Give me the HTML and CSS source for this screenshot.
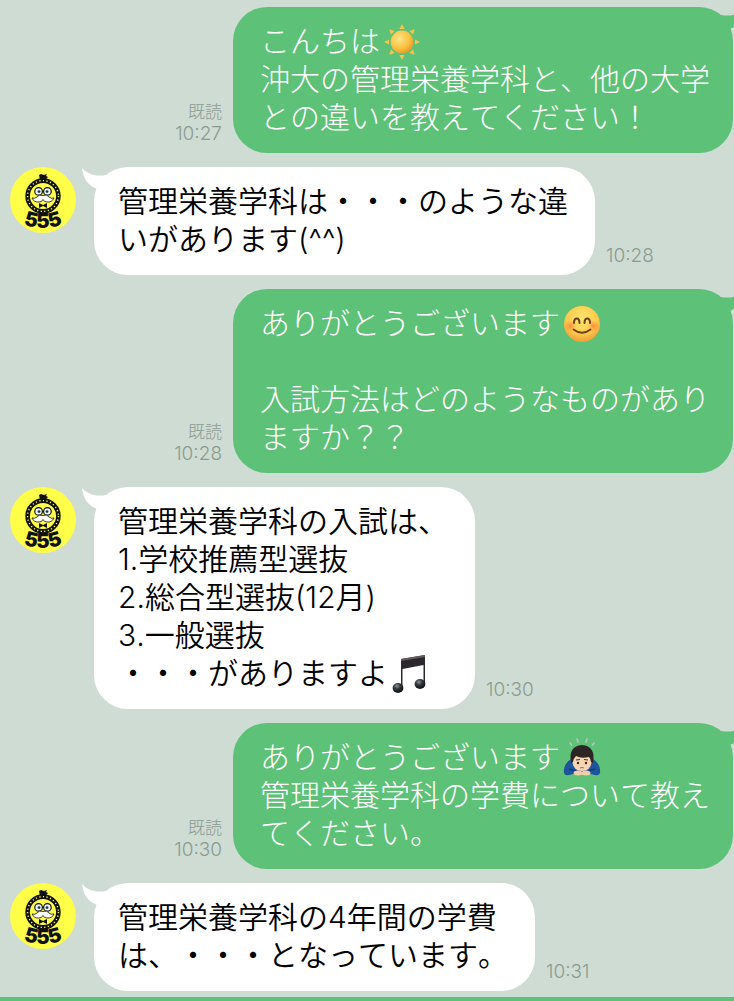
FILE: index.html
```
<!DOCTYPE html>
<html lang="ja">
    <head>
        <title>トーク</title>
        <meta charset="UTF-8">
        <meta name="viewport" content="width=device-width">
        <link rel="stylesheet" href="styles.css">
    </head>
    <body>
        <!-- shared drawings -->
        <svg class="defs" aria-hidden="true">
            <symbol id="tail" viewBox="0 0 30 26">
                <path d="M0 1 C6 7 13 10 24 8 L26 26 L13 21 C6 18 1 11 0 1Z"/>
            </symbol>
            <radialGradient id="sunFill" cx=".38" cy=".35" r=".7">
                <stop offset="0" stop-color="#ffe38a"/>
                <stop offset=".6" stop-color="#fbc443"/>
                <stop offset="1" stop-color="#e79a25"/>
            </radialGradient>
            <radialGradient id="faceFill" cx=".5" cy=".35" r=".65">
                <stop offset="0" stop-color="#ffe672"/>
                <stop offset=".65" stop-color="#fccb4c"/>
                <stop offset="1" stop-color="#ee9e35"/>
            </radialGradient>
            <radialGradient id="cheek">
                <stop offset="0" stop-color="#f8703a" stop-opacity=".7"/>
                <stop offset="1" stop-color="#f8803a" stop-opacity="0"/>
            </radialGradient>
            <radialGradient id="noteFill" cx=".4" cy=".3" r=".6">
                <stop offset="0" stop-color="#8a929a"/>
                <stop offset=".5" stop-color="#33383e"/>
                <stop offset="1" stop-color="#15171b"/>
            </radialGradient>
        </svg>

        <main class="talk">
            <div class="row me">
                <div class="info"><span>既読</span><time>10:27</time></div>
                <div class="bubble">
                    <svg class="tail" aria-hidden="true"><use href="#tail"/></svg>
                    こんちは<svg class="emoji" viewBox="0 0 36 36" role="img" aria-label="太陽">
                        <g fill="#f6c44b">
                            <path id="ray" d="M18 0 L20.600 5 L15.400 5Z"/>
                            <use href="#ray" transform="rotate(45 18 18)"/>
                            <use href="#ray" transform="rotate(90 18 18)"/>
                            <use href="#ray" transform="rotate(135 18 18)"/>
                            <use href="#ray" transform="rotate(180 18 18)"/>
                            <use href="#ray" transform="rotate(225 18 18)"/>
                            <use href="#ray" transform="rotate(270 18 18)"/>
                            <use href="#ray" transform="rotate(315 18 18)"/>
                        </g>
                        <circle cx="18" cy="18" r="11.400" fill="url(#sunFill)"/>
                    </svg><br>沖大の管理栄養学科と、他の大学との違いを教えてください！
                </div>
            </div>

            <div class="row bot">
                <svg class="avatar" viewBox="0 0 66 66" role="img" aria-label="555">
                    <g id="mascot">
                        <circle cx="33" cy="33" r="33" fill="#ffff4a"/>
                        <path d="M29 8 L31 7 L34 8 L37 7 L36 9 L38 10 L35 13 L30 13Z" fill="#111"/>
                        <circle cx="33" cy="29" r="15.400" fill="none" stroke="#111" stroke-width="4.600"/>
                        <circle cx="33" cy="29" r="15.400" fill="none" stroke="#ffff4a" stroke-width="1.400" stroke-dasharray="1.200 2.400"/>
                        <circle cx="28.600" cy="24.400" r="3.800" fill="#e9f6ff" stroke="#111" stroke-width="1.200"/>
                        <circle cx="37.400" cy="24.400" r="3.800" fill="#e9f6ff" stroke="#111" stroke-width="1.200"/>
                        <circle cx="29" cy="24.600" r="1.400" fill="#234"/>
                        <circle cx="37" cy="24.600" r="1.400" fill="#234"/>
                        <path d="M33 28.500 Q37 27 39 30 Q41 32 44 31 Q42 35.500 37 35 Q34 35 33 32.500 Q32 35 29 35 Q24 35.500 22 31 Q25 32 27 30 Q29 27 33 28.500Z" fill="#fff" stroke="#111" stroke-width=".8"/>
                        <path d="M29 36 L33 38 L37 36 L37 41 L33 39 L29 41Z" fill="#111"/>
                        <path id="arc" d="M10 56 Q33 66 56 56" fill="none"/>
                        <text class="mascot-no"><textPath href="#arc" startOffset="50%" text-anchor="middle">555</textPath></text>
                    </g>
                </svg>
                <div class="bubble">
                    <svg class="tail" aria-hidden="true"><use href="#tail"/></svg>
                    管理栄養学科は・・・のような違いがあります(^^)
                </div>
                <div class="info"><time>10:28</time></div>
            </div>

            <div class="row me">
                <div class="info"><span>既読</span><time>10:28</time></div>
                <div class="bubble">
                    <svg class="tail" aria-hidden="true"><use href="#tail"/></svg>
                    ありがとうございます<svg class="emoji" viewBox="0 0 36 36" role="img" aria-label="笑顔">
                        <circle cx="18" cy="18" r="18" fill="url(#faceFill)"/>
                        <circle cx="6.500" cy="20" r="6" fill="url(#cheek)"/>
                        <circle cx="29.500" cy="20" r="6" fill="url(#cheek)"/>
                        <path d="M10 17 C10 11 15.500 11 15.500 17 M20.500 17 C20.500 11 26 11 26 17" fill="none" stroke="#69401a" stroke-width="2" stroke-linecap="round"/>
                        <path d="M9.500 23.500 Q18 30 26.500 23.500" fill="none" stroke="#69401a" stroke-width="1.800" stroke-linecap="round"/>
                    </svg><br><br>入試方法はどのようなものがありますか？？
                </div>
            </div>

            <div class="row bot">
                <svg class="avatar" viewBox="0 0 66 66" role="img" aria-label="555"><use href="#mascot"/></svg>
                <div class="bubble">
                    <svg class="tail" aria-hidden="true"><use href="#tail"/></svg>
                    管理栄養学科の入試は、<br>1.学校推薦型選抜<br>2.総合型選抜(12月)<br>3.一般選抜<br>・・・がありますよ<svg class="emoji" viewBox="0 0 36 36" role="img" aria-label="音符">
                        <path d="M9 3 L33 -1 L33 27 L31.500 27 L31.500 9 L10.500 13 L10.500 31 L9 31Z" fill="#2a282c"/>
                        <path d="M9 3 L33 -1 L33 1 L9 5Z" fill="#66595c"/>
                        <ellipse cx="6" cy="32" rx="5.400" ry="5" fill="url(#noteFill)"/>
                        <ellipse cx="28" cy="28" rx="5.400" ry="5" fill="url(#noteFill)"/>
                    </svg>
                </div>
                <div class="info"><time>10:30</time></div>
            </div>

            <div class="row me">
                <div class="info"><span>既読</span><time>10:30</time></div>
                <div class="bubble">
                    <svg class="tail" aria-hidden="true"><use href="#tail"/></svg>
                    ありがとうございます<svg class="emoji" viewBox="0 0 36 36" role="img" aria-label="お辞儀">
                        <path d="M6 3 L7.500 5 M13 -1 L14 2 M23 -1 L22 2 M30 3 L28.500 5" stroke="#b3c2b8" stroke-width="1.800" stroke-linecap="round"/>
                        <path d="M0 33 Q-1 23 9 18 L27 18 Q37 23 36 33 Q35 36 31 35 L22 33 L14 33 L5 35 Q1 36 0 33Z" fill="#1d549c"/>
                        <path d="M5 29 L12 31 M31 29 L24 31" stroke="#123d7a" stroke-width="1.500"/>
                        <path d="M8 18 Q8 31 18 31 Q28 31 28 18 L26 12 L10 12Z" fill="#f6d5b5"/>
                        <path d="M7 23 Q4 6 18 5 Q32 6 29 23 L27 22 Q27 19 25 17 Q17 19 12 16 Q9 19 9 22Z" fill="#2d2624"/>
                        <path d="M12 20 L16 19.500 M20 19.500 L24 20" stroke="#4a3328" stroke-width="1"/>
                        <circle cx="14" cy="23" r="1.200" fill="#3d261c"/>
                        <circle cx="22" cy="23" r="1.200" fill="#3d261c"/>
                        <path d="M16 28 Q18 27 20 28" fill="none" stroke="#b56448" stroke-width="1"/>
                        <ellipse cx="14" cy="33" rx="4.500" ry="2.500" fill="#f3cca8"/>
                        <ellipse cx="22" cy="33" rx="4.500" ry="2.500" fill="#f3cca8"/>
                    </svg><br>管理栄養学科の学費について教えてください。
                </div>
            </div>

            <div class="row bot">
                <svg class="avatar" viewBox="0 0 66 66" role="img" aria-label="555"><use href="#mascot"/></svg>
                <div class="bubble">
                    <svg class="tail" aria-hidden="true"><use href="#tail"/></svg>
                    管理栄養学科の4年間の学費<br>は、・・・となっています。
                </div>
                <div class="info"><time>10:31</time></div>
            </div>
        </main>
        <div class="bottom-line"></div>
    </body>
</html>
```

FILE: styles.css
```
body{
    margin: 0;
    background-color: #cedcd3;
    font-family: Inter, "Noto Sans CJK JP", sans-serif;
    font-weight: 300;
    font-kerning: none;
    text-spacing-trim: space-all;
    overflow-x: hidden;
}
.defs{
    position: absolute;
    width: 0;
    height: 0;
}
.talk{
    display: flex;
    flex-direction: column;
    gap: 14px;
    padding: 7px 0 6px 10px;
    overflow: hidden;
}
.row{
    display: flex;
    align-items: flex-end;
}
.me{
    justify-content: flex-end;
    padding-right: 1px;
}
.bubble{
    position: relative;
    box-sizing: border-box;
    max-width: 501px;
    border-radius: 34px;
    font-size: 30px;
    line-height: 38px;
}
.me .bubble{
    max-width: 500px;
    padding: 15px 23px 17px 27px;
    background-color: #5dc178;
    color: white;
}
.bot .bubble{
    padding: 15px 27px 17px 24px;
    background-color: white;
    color: black;
    font-weight: 350;
}
/* the small horn at the top corner of a bubble */
.tail{
    position: absolute;
    top: 0;
    left: -12px;
    width: 30px;
    height: 26px;
    fill: white;
}
.me .tail{
    left: auto;
    right: -12px;
    fill: #5dc178;
    transform: scaleX(-1);
}
.avatar{
    align-self: flex-start;
    flex: none;
    width: 66px;
    height: 66px;
    margin-right: 18px;
}
.mascot-no{
    font-family: Inter, sans-serif;
    font-size: 20px;
    font-weight: 900;
    fill: #111;
}
.emoji{
    width: 36px;
    height: 36px;
    margin: -6px 4px -2px;
    vertical-align: middle;
    overflow: visible;
}
.info{
    display: flex;
    flex-direction: column;
    flex: none;
    margin: 0 11px 8px;
    font-size: 17px;
    line-height: 22px;
    text-align: right;
    color: #8c9b92;
}
.info time{
    font-size: 19px;
}
.bottom-line{
    height: 4px;
    background-color: #5dc178;
}
```
